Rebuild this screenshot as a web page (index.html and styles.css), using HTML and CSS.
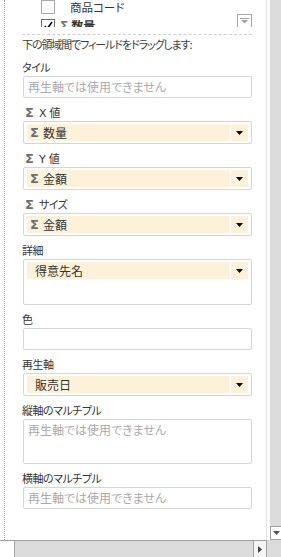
FILE: index.html
```html
<!DOCTYPE html>
<html lang="ja">
<head>
<meta charset="utf-8">
<link rel="stylesheet" href="styles.css">
</head>
<body>
<div class="app">
  <div class="top">
    <div class="panel">
      <div class="inner">
        <div class="fields">
          <div class="frow">
            <span class="cb"></span><span class="fname">商品コード</span>
          </div>
          <div class="frow">
            <span class="cb checked"><svg width="11" height="11" viewBox="0 0 11 11"><path d="M2 6 L4 9 L9 2" fill="none" stroke="#000" stroke-width="1.6"/></svg></span><span class="fsig">Σ</span><span class="fname bold">数量</span>
          </div>
          <span class="fdrop"><svg width="9" height="6" viewBox="0 0 9 6"><path d="M0 0 H9 V1 H0 Z M1 2 H8 L4.5 5.5 Z" fill="#a0a0a0"/></svg></span>
        </div>
        <div class="sep"></div>
        <div class="hint">下の領域間でフィールドをドラッグします:</div>

        <div class="label">タイル</div>
        <div class="box ph">再生軸では使用できません</div>

        <div class="label"><span class="sig">Σ</span><span class="ax">X</span>値</div>
        <div class="box"><div class="item"><span class="isig">Σ</span><span class="itext">数量</span><span class="drop"><svg width="7" height="4" viewBox="0 0 7 4"><path d="M0 0 H7 L3.5 4 Z" fill="#000"/></svg></span></div></div>

        <div class="label"><span class="sig">Σ</span><span class="ax">Y</span>値</div>
        <div class="box"><div class="item"><span class="isig">Σ</span><span class="itext">金額</span><span class="drop"><svg width="7" height="4" viewBox="0 0 7 4"><path d="M0 0 H7 L3.5 4 Z" fill="#000"/></svg></span></div></div>

        <div class="label"><span class="sig">Σ</span>サイズ</div>
        <div class="box"><div class="item"><span class="isig">Σ</span><span class="itext">金額</span><span class="drop"><svg width="7" height="4" viewBox="0 0 7 4"><path d="M0 0 H7 L3.5 4 Z" fill="#000"/></svg></span></div></div>

        <div class="label">詳細</div>
        <div class="box tall"><div class="item"><span class="itext plain">得意先名</span><span class="drop"><svg width="7" height="4" viewBox="0 0 7 4"><path d="M0 0 H7 L3.5 4 Z" fill="#000"/></svg></span></div></div>

        <div class="label">色</div>
        <div class="box empty"></div>

        <div class="label">再生軸</div>
        <div class="box"><div class="item"><span class="itext plain">販売日</span><span class="drop"><svg width="7" height="4" viewBox="0 0 7 4"><path d="M0 0 H7 L3.5 4 Z" fill="#000"/></svg></span></div></div>

        <div class="label">縦軸のマルチプル</div>
        <div class="box tall2 ph">再生軸では使用できません</div>

        <div class="label">横軸のマルチプル</div>
        <div class="box ph">再生軸では使用できません</div>
      </div>
    </div>
    <div class="vscroll">
      <span class="vbtn"><svg width="7" height="4" viewBox="0 0 7 4"><path d="M0 0 H7 L3.5 4 Z" fill="#505050"/></svg></span>
    </div>
  </div>
  <div class="bottom">
    <span class="hleft"></span>
    <span class="htrack"></span>
    <span class="hbtn"><svg width="4" height="7" viewBox="0 0 4 7"><path d="M0 0 V7 L4 3.5 Z" fill="#404040"/></svg></span>
    <span class="hrest"></span>
  </div>
</div>
</body>
</html>
```

FILE: styles.css
```css
* { box-sizing: border-box; }
html, body {
  margin: 0;
  padding: 0;
  width: 281px;
  height: 557px;
  overflow: hidden;
  background: #fff;
}
body {
  font-family: "Noto Sans CJK JP", "Noto Sans", sans-serif;
  font-feature-settings: "palt";
  font-size: 12px;
  color: #444;
}
.app {
  width: 281px;
  height: 557px;
  display: flex;
  flex-direction: column;
}
.top {
  display: flex;
  height: 540px;
}
.panel {
  width: 270px;
  padding-left: 4px;
}
.inner {
  height: 540px;
  border-left: 1px dotted #9a9a9a;
  border-right: 1px solid #e2e2e2;
  width: 263px;
  padding-left: 17px;
  padding-right: 14px;
  overflow: hidden;
}
.fields {
  position: relative;
  height: 27px;
  overflow: hidden;
}
.frow {
  display: flex;
  align-items: center;
  height: 19px;
  margin-top: -3px;
  margin-bottom: 3px;
}
.cb {
  width: 14px;
  height: 14px;
  border: 1px solid #a8a8a8;
  margin-left: 19px;
  background: #fff;
  display: inline-flex;
  align-items: center;
  justify-content: center;
}
.cb.checked { border-color: #6a6a6a; }
.fname {
  margin-left: 15px;
  color: #333;
  font-size: 11.5px;
}
.fsig {
  margin-left: 5px;
  color: #777;
  font-weight: bold;
  font-family: "DejaVu Sans", sans-serif;
  font-size: 12px;
}
.fname.bold { margin-left: 3px; font-weight: bold; font-size: 12px; }
.fdrop {
  position: absolute;
  right: 0;
  top: 14px;
  width: 15px;
  height: 14px;
  border: 1px solid #a6a6a6;
  display: flex;
  align-items: center;
  justify-content: center;
  background: #fff;
}
.sep {
  height: 0;
  border-top: 1px dashed #cfcfcf;
  margin-top: 7px;
}
.hint {
  margin-top: 1px;
  height: 17px;
  line-height: 17px;
  font-size: 11px;
  letter-spacing: -1.1px;
  color: #3c3c3c;
  white-space: nowrap;
}
.label {
  height: 23px;
  padding-top: 6px;
  line-height: 16px;
  font-size: 11px;
  letter-spacing: -0.5px;
  color: #333;
  white-space: nowrap;
}
.sig {
  display: inline-block;
  margin-left: 3px;
  margin-right: 5px;
  color: #6e6e6e;
  font-weight: bold;
  font-family: "DejaVu Sans", sans-serif;
  font-size: 13px;
  letter-spacing: 0;
}
.ax {
  display: inline-block;
  margin-right: 3px;
  font-family: "DejaVu Sans", sans-serif;
  font-size: 11px;
  letter-spacing: 0;
}
.box {
  margin-left: 1px;
  width: 229px;
  height: 23px;
  border: 1px solid #d5d5d5;
  border-radius: 2px;
  padding: 2px 3px;
  background: #fff;
}
.box.tall { height: 46px; }
.box.tall2 { height: 45px; }
.box.empty { height: 22px; }
.box.ph {
  color: #a9a9a9;
  padding: 0 4px;
  line-height: 20px;
  white-space: nowrap;
}
.box.ph:not(.tall2) { height: 22px; }
.item {
  height: 17px;
  background: #fdf1d9;
  display: flex;
  align-items: center;
  color: #333;
}
.isig {
  margin-left: 3px;
  color: #6e6e6e;
  font-weight: bold;
  font-family: "DejaVu Sans", sans-serif;
  font-size: 13px;
}
.itext {
  margin-left: 4px;
  flex: 1;
}
.itext.plain { margin-left: 8px; }
.drop {
  width: 18px;
  height: 17px;
  border-left: 1px solid #fff;
  display: flex;
  align-items: center;
  justify-content: center;
}
.vscroll {
  width: 11px;
  background: #dcdcdc;
  position: relative;
}
.vbtn {
  position: absolute;
  left: 0;
  bottom: 0;
  width: 11px;
  height: 14px;
  background: #fff;
  border: 1px solid #a0a0a0;
  border-right: 0;
  display: flex;
  align-items: center;
  justify-content: center;
}
.bottom {
  display: flex;
  height: 17px;
  background: #dcdcdc;
}
.hleft {
  width: 15px;
  height: 17px;
  background: #fff;
  border-top: 1px solid #a0a0a0;
  border-right: 1px solid #a0a0a0;
}
.htrack {
  width: 238px;
  border-top: 1px solid #a0a0a0;
}
.hbtn {
  width: 14px;
  border: 1px solid #a0a0a0;
  border-bottom: 0;
  background: #f4f4f4;
  display: flex;
  align-items: center;
  justify-content: center;
}
.hrest {
  flex: 1;
}
```
